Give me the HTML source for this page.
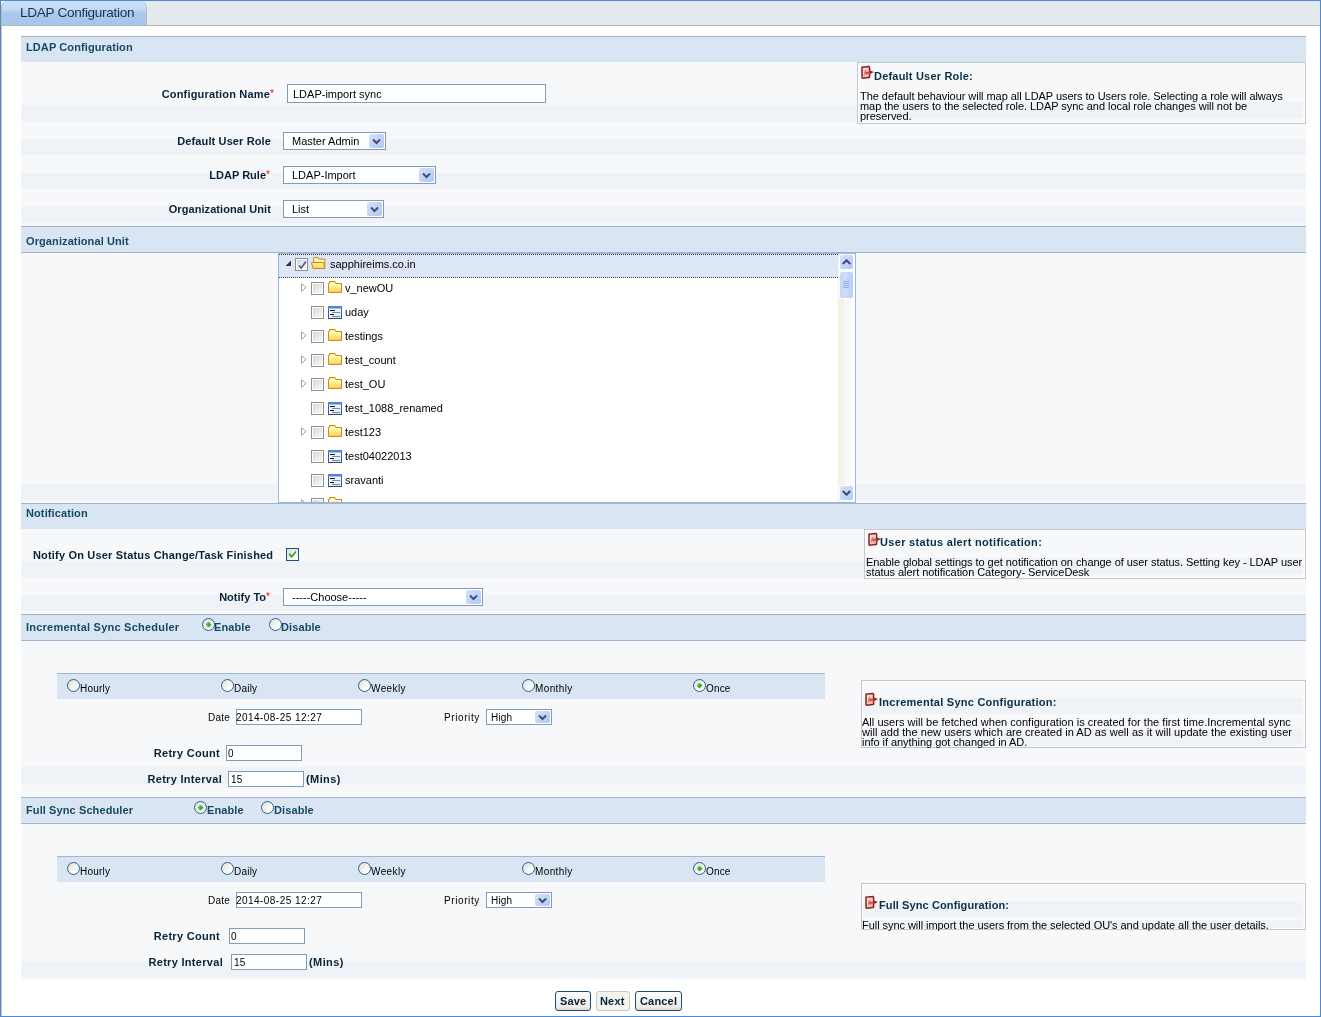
<!DOCTYPE html>
<html><head><meta charset="utf-8">
<style>
*{box-sizing:border-box}
html,body{margin:0;padding:0;width:1321px;height:1017px;overflow:hidden;background:#fff;font-family:"Liberation Sans",sans-serif;font-size:11px;color:#000}
.a{position:absolute}
.t{position:absolute;white-space:pre;line-height:12px;font-size:11px}
.b{font-weight:bold}
.s10{font-size:10px;letter-spacing:0.2px}
.lbl{font-weight:bold;color:#082338;letter-spacing:0.18px}
.hd{font-weight:bold;color:#164a63;letter-spacing:0.1px}
.req{color:#f00;font-size:10px}
.hdr{position:absolute;left:21px;width:1285px;background:#dae5f3;border-top:1px solid #a2b5cc}
.lt{position:absolute;left:21px;width:1285px;background:#f7f8fa}
.dk{position:absolute;left:21px;width:1285px;background:#eff2f6}
.inp{position:absolute;border:1px solid #7f9db9;background:#fff}
.sel{position:absolute;border:1px solid #7f9db9;background:#fff}
.sel .btn{position:absolute;right:1px;top:1px;width:15px;bottom:1px;border-radius:2px;background:linear-gradient(135deg,#d6e2fc 0%,#c3d4f9 50%,#b1c7f4 100%)}
.sel .btn svg{position:absolute;left:3px;top:4px}
.help{position:absolute;border:1px solid #c3c7cb;background:#f7f8fa;box-shadow:inset 0 0 0 1px #fdfdfe}
.hk{position:absolute;background:#eff2f6}
.ht{position:absolute;white-space:pre;font-weight:bold;color:#0a3048;line-height:12px;letter-spacing:0.2px}
.hb{position:absolute;white-space:pre;line-height:10px;letter-spacing:-0.05px}
.radio{position:absolute;width:13px;height:13px;border-radius:50%;border:1px solid #2a5f92;background:linear-gradient(135deg,#dcdcd6 0%,#efefeb 40%,#fdfdfd 75%,#fff 100%)}
.radio.on::after{content:"";position:absolute;left:2.5px;top:2.5px;width:6px;height:6px;clip-path:polygon(50% 0,100% 50%,50% 100%,0 50%);background:linear-gradient(135deg,#5ee05e 0%,#2bb52b 50%,#0a8a0a 100%)}
.cb{position:absolute;width:13px;height:13px;border:1px solid #8f9090;box-shadow:inset 0 0 0 1px #fff;background:linear-gradient(135deg,#d0d0cf 0%,#e6e6e4 45%,#fafafa 100%)}
</style></head><body><div style="position:absolute;left:0;top:0;width:1321px;height:1017px;will-change:transform">
<!-- outer border -->
<div class="a" style="left:0;top:0;width:1321px;height:1017px;border:1px solid #4a8ad6"></div>
<!-- tab bar -->
<div class="a" style="left:1px;top:1px;width:1319px;height:25px;background:#e4e9ed;border-bottom:1px solid #b5baa8"></div>
<div class="a" style="left:1px;top:1px;width:6px;height:8px;background:#fbfbf8"></div>
<div class="a" style="left:1px;top:25px;width:1px;height:991px;background:#c4c4c0"></div>
<div class="a" style="left:1px;top:1px;width:146px;height:25px;border-top-right-radius:7px;border-top-left-radius:6px;border-left:1px solid #b9bdb0;border-right:1px solid #b9bdb3;border-bottom:1px solid #b5baa8;background:linear-gradient(#cbe0f6 0px,#c9ddf5 7px,#c3d3f3 9px,#abc9ee 12px,#a4c5ec 25px)"></div>
<div class="t" style="left:20px;top:5px;font-size:13.6px;line-height:15px;letter-spacing:-0.32px;color:#16384c">LDAP Configuration</div>

<!-- ============ Section 1 ============ -->
<div class="hdr" style="top:36px;height:26px"></div>
<div class="t hd" style="left:26px;top:41px">LDAP Configuration</div>
<div class="lt" style="top:62px;height:164px"></div>
<div class="dk" style="top:105px;height:16px"></div>
<div class="dk" style="top:139px;height:16px"></div>
<div class="dk" style="top:173px;height:16px"></div>
<div class="dk" style="top:207px;height:16px"></div>

<div class="t lbl" style="right:1051px;top:88px">Configuration Name</div><div class="t req" style="left:270px;top:88px">*</div>
<div class="inp" style="left:287px;top:84px;width:259px;height:19px"></div>
<div class="t" style="left:293px;top:88px">LDAP-import sync</div>

<div class="t lbl" style="right:1050px;top:135px;letter-spacing:0.12px">Default User Role</div>
<div class="sel" style="left:283px;top:132px;width:103px;height:18px"><div class="btn"><svg width="9" height="7" viewBox="0 0 9 7"><path d="M1 1.5 L4.5 5 L8 1.5" fill="none" stroke="#3e5078" stroke-width="2"/></svg></div></div>
<div class="t" style="left:292px;top:135px">Master Admin</div>

<div class="t lbl" style="right:1055px;top:169px;letter-spacing:0px">LDAP Rule</div><div class="t req" style="left:266px;top:169px">*</div>
<div class="sel" style="left:283px;top:166px;width:153px;height:18px"><div class="btn"><svg width="9" height="7" viewBox="0 0 9 7"><path d="M1 1.5 L4.5 5 L8 1.5" fill="none" stroke="#3e5078" stroke-width="2"/></svg></div></div>
<div class="t" style="left:292px;top:169px">LDAP-Import</div>

<div class="t lbl" style="right:1050px;top:203px;letter-spacing:0.08px">Organizational Unit</div>
<div class="sel" style="left:283px;top:200px;width:101px;height:18px"><div class="btn"><svg width="9" height="7" viewBox="0 0 9 7"><path d="M1 1.5 L4.5 5 L8 1.5" fill="none" stroke="#3e5078" stroke-width="2"/></svg></div></div>
<div class="t" style="left:292px;top:203px">List</div>

<!-- help 1 -->
<div class="help" style="left:857px;top:62px;width:449px;height:62px"></div><div class="hk" style="left:859px;top:102px;width:444px;height:16px"></div>
<svg class="a" style="left:860px;top:65px" width="15" height="15" viewBox="0 0 15 15"><defs><linearGradient id="hg" x1="0" y1="0" x2="1" y2="1"><stop offset="0" stop-color="#fde8e2"/><stop offset="1" stop-color="#f4aaa2"/></linearGradient></defs><path d="M2 2.2 L8.8 1.6 Q9.6 1.6 9.6 2.4 V11.9 Q9.6 12.5 8.9 12.6 L2.6 13.3 Q2 13.3 2 12.6 Z" fill="url(#hg)" stroke="#7e2820" stroke-width="1.5"/><path d="M4 10.5 L5.5 5 L6.6 10" fill="none" stroke="#c7766c" stroke-width="1"/><path d="M5.5 8 L10.8 7.3" stroke="#e23c3c" stroke-width="1.8"/><path d="M10 5.4 L13.8 7 L10.2 8.9 Z" fill="#8a2420"/></svg><div class="t ht" style="left:874px;top:70px">Default User Role:</div>
<div class="hb" style="left:860px;top:91px">The default behaviour will map all LDAP users to Users role. Selecting a role will always
map the users to the selected role. LDAP sync and local role changes will not be
preserved.</div>

<!-- ============ Section 2 Org Unit ============ -->
<div class="hdr" style="top:226px;height:27px;border-bottom:1px solid #a2b5cc"></div>
<div class="t hd" style="left:26px;top:235px">Organizational Unit</div>
<div class="lt" style="top:253px;height:250px"></div>
<div class="dk" style="top:484px;height:16px"></div>

<!-- tree box -->
<div class="a" id="tree" style="left:278px;top:253px;width:578px;height:250px;border:1px solid #97b7e3;background:#fff;overflow:hidden">
<div class="a" style="left:0;top:0;width:559px;height:24px;background:#dce6f4;border-top:1px dotted #444;border-bottom:1px dotted #444"></div>
<svg class="a" style="left:6px;top:6px" width="7" height="7" viewBox="0 0 7 7"><path d="M6 0.5 V6 H0.5 Z" fill="#333"/></svg>
<div class="cb" style="left:16px;top:4px"><svg class="a" style="left:2px;top:1px" width="9" height="10" viewBox="0 0 9 10"><path d="M1 5.5 L3.2 8 L8 1.5" fill="none" stroke="#3e5aa8" stroke-width="1.6"/></svg></div>
<svg class="a" style="left:32px;top:3px" width="16" height="13" viewBox="0 0 16 13"><defs><linearGradient id="fo" x1="0" y1="0" x2="0" y2="1"><stop offset="0" stop-color="#fff6a0"/><stop offset="1" stop-color="#fbd060"/></linearGradient></defs><path d="M2.5 2.5 V1.2 Q2.5 0.5 3.2 0.5 H6.8 L7.8 2 H13.8 V11.5 H2.5 Z" fill="#fff4b0" stroke="#c98a1a"/><path d="M0.5 5.5 H12.5 L13.8 11.5 H2 Z" fill="url(#fo)" stroke="#c98a1a"/></svg>
<div class="t" style="left:51px;top:4px">sapphireims.co.in</div>
<svg class="a" style="left:22px;top:29px" width="6" height="9" viewBox="0 0 6 9"><path d="M0.5 0.7 L5 4.5 L0.5 8.3 Z" fill="#fff" stroke="#a0a0a0" stroke-width="1"/></svg>
<div class="cb" style="left:32px;top:28px"></div>
<svg class="a" style="left:49px;top:27px" width="15" height="13" viewBox="0 0 15 13"><defs><linearGradient id="fg" x1="0" y1="0" x2="0" y2="1"><stop offset="0" stop-color="#fffbb0"/><stop offset="0.45" stop-color="#fff48a"/><stop offset="1" stop-color="#fbcf5f"/></linearGradient></defs><path d="M0.5 2.5 H1.5 V0.5 H7 L7.5 2.5 H13.5 V11.5 H0.5 Z" fill="url(#fg)" stroke="#c98a1a" stroke-width="1"/><path d="M1.5 3.5 H12.5" stroke="#fffef0" stroke-width="1"/></svg>
<div class="t" style="left:66px;top:28px">v_newOU</div>
<div class="cb" style="left:32px;top:52px"></div>
<svg class="a" style="left:49px;top:52px" width="14" height="13" viewBox="0 0 14 13"><defs><linearGradient id="ug" x1="0" y1="0" x2="1" y2="1"><stop offset="0" stop-color="#fff"/><stop offset="1" stop-color="#dfe8f7"/></linearGradient></defs><rect x="0.5" y="0.5" width="13" height="12" fill="url(#ug)" stroke="#3560a8"/><rect x="0" y="0" width="14" height="2.5" fill="#4f82e0"/><rect x="0" y="12" width="14" height="1" fill="#26497e"/><rect x="2" y="4" width="5" height="1" fill="#111"/><rect x="4" y="6" width="8" height="1" fill="#888"/><rect x="2" y="8" width="4" height="1" fill="#111"/><rect x="4" y="10" width="8" height="1" fill="#888"/></svg>
<div class="t" style="left:66px;top:52px">uday</div>
<svg class="a" style="left:22px;top:77px" width="6" height="9" viewBox="0 0 6 9"><path d="M0.5 0.7 L5 4.5 L0.5 8.3 Z" fill="#fff" stroke="#a0a0a0" stroke-width="1"/></svg>
<div class="cb" style="left:32px;top:76px"></div>
<svg class="a" style="left:49px;top:75px" width="15" height="13" viewBox="0 0 15 13"><defs><linearGradient id="fg" x1="0" y1="0" x2="0" y2="1"><stop offset="0" stop-color="#fffbb0"/><stop offset="0.45" stop-color="#fff48a"/><stop offset="1" stop-color="#fbcf5f"/></linearGradient></defs><path d="M0.5 2.5 H1.5 V0.5 H7 L7.5 2.5 H13.5 V11.5 H0.5 Z" fill="url(#fg)" stroke="#c98a1a" stroke-width="1"/><path d="M1.5 3.5 H12.5" stroke="#fffef0" stroke-width="1"/></svg>
<div class="t" style="left:66px;top:76px">testings</div>
<svg class="a" style="left:22px;top:101px" width="6" height="9" viewBox="0 0 6 9"><path d="M0.5 0.7 L5 4.5 L0.5 8.3 Z" fill="#fff" stroke="#a0a0a0" stroke-width="1"/></svg>
<div class="cb" style="left:32px;top:100px"></div>
<svg class="a" style="left:49px;top:99px" width="15" height="13" viewBox="0 0 15 13"><defs><linearGradient id="fg" x1="0" y1="0" x2="0" y2="1"><stop offset="0" stop-color="#fffbb0"/><stop offset="0.45" stop-color="#fff48a"/><stop offset="1" stop-color="#fbcf5f"/></linearGradient></defs><path d="M0.5 2.5 H1.5 V0.5 H7 L7.5 2.5 H13.5 V11.5 H0.5 Z" fill="url(#fg)" stroke="#c98a1a" stroke-width="1"/><path d="M1.5 3.5 H12.5" stroke="#fffef0" stroke-width="1"/></svg>
<div class="t" style="left:66px;top:100px">test_count</div>
<svg class="a" style="left:22px;top:125px" width="6" height="9" viewBox="0 0 6 9"><path d="M0.5 0.7 L5 4.5 L0.5 8.3 Z" fill="#fff" stroke="#a0a0a0" stroke-width="1"/></svg>
<div class="cb" style="left:32px;top:124px"></div>
<svg class="a" style="left:49px;top:123px" width="15" height="13" viewBox="0 0 15 13"><defs><linearGradient id="fg" x1="0" y1="0" x2="0" y2="1"><stop offset="0" stop-color="#fffbb0"/><stop offset="0.45" stop-color="#fff48a"/><stop offset="1" stop-color="#fbcf5f"/></linearGradient></defs><path d="M0.5 2.5 H1.5 V0.5 H7 L7.5 2.5 H13.5 V11.5 H0.5 Z" fill="url(#fg)" stroke="#c98a1a" stroke-width="1"/><path d="M1.5 3.5 H12.5" stroke="#fffef0" stroke-width="1"/></svg>
<div class="t" style="left:66px;top:124px">test_OU</div>
<div class="cb" style="left:32px;top:148px"></div>
<svg class="a" style="left:49px;top:148px" width="14" height="13" viewBox="0 0 14 13"><defs><linearGradient id="ug" x1="0" y1="0" x2="1" y2="1"><stop offset="0" stop-color="#fff"/><stop offset="1" stop-color="#dfe8f7"/></linearGradient></defs><rect x="0.5" y="0.5" width="13" height="12" fill="url(#ug)" stroke="#3560a8"/><rect x="0" y="0" width="14" height="2.5" fill="#4f82e0"/><rect x="0" y="12" width="14" height="1" fill="#26497e"/><rect x="2" y="4" width="5" height="1" fill="#111"/><rect x="4" y="6" width="8" height="1" fill="#888"/><rect x="2" y="8" width="4" height="1" fill="#111"/><rect x="4" y="10" width="8" height="1" fill="#888"/></svg>
<div class="t" style="left:66px;top:148px">test_1088_renamed</div>
<svg class="a" style="left:22px;top:173px" width="6" height="9" viewBox="0 0 6 9"><path d="M0.5 0.7 L5 4.5 L0.5 8.3 Z" fill="#fff" stroke="#a0a0a0" stroke-width="1"/></svg>
<div class="cb" style="left:32px;top:172px"></div>
<svg class="a" style="left:49px;top:171px" width="15" height="13" viewBox="0 0 15 13"><defs><linearGradient id="fg" x1="0" y1="0" x2="0" y2="1"><stop offset="0" stop-color="#fffbb0"/><stop offset="0.45" stop-color="#fff48a"/><stop offset="1" stop-color="#fbcf5f"/></linearGradient></defs><path d="M0.5 2.5 H1.5 V0.5 H7 L7.5 2.5 H13.5 V11.5 H0.5 Z" fill="url(#fg)" stroke="#c98a1a" stroke-width="1"/><path d="M1.5 3.5 H12.5" stroke="#fffef0" stroke-width="1"/></svg>
<div class="t" style="left:66px;top:172px">test123</div>
<div class="cb" style="left:32px;top:196px"></div>
<svg class="a" style="left:49px;top:196px" width="14" height="13" viewBox="0 0 14 13"><defs><linearGradient id="ug" x1="0" y1="0" x2="1" y2="1"><stop offset="0" stop-color="#fff"/><stop offset="1" stop-color="#dfe8f7"/></linearGradient></defs><rect x="0.5" y="0.5" width="13" height="12" fill="url(#ug)" stroke="#3560a8"/><rect x="0" y="0" width="14" height="2.5" fill="#4f82e0"/><rect x="0" y="12" width="14" height="1" fill="#26497e"/><rect x="2" y="4" width="5" height="1" fill="#111"/><rect x="4" y="6" width="8" height="1" fill="#888"/><rect x="2" y="8" width="4" height="1" fill="#111"/><rect x="4" y="10" width="8" height="1" fill="#888"/></svg>
<div class="t" style="left:66px;top:196px">test04022013</div>
<div class="cb" style="left:32px;top:220px"></div>
<svg class="a" style="left:49px;top:220px" width="14" height="13" viewBox="0 0 14 13"><defs><linearGradient id="ug" x1="0" y1="0" x2="1" y2="1"><stop offset="0" stop-color="#fff"/><stop offset="1" stop-color="#dfe8f7"/></linearGradient></defs><rect x="0.5" y="0.5" width="13" height="12" fill="url(#ug)" stroke="#3560a8"/><rect x="0" y="0" width="14" height="2.5" fill="#4f82e0"/><rect x="0" y="12" width="14" height="1" fill="#26497e"/><rect x="2" y="4" width="5" height="1" fill="#111"/><rect x="4" y="6" width="8" height="1" fill="#888"/><rect x="2" y="8" width="4" height="1" fill="#111"/><rect x="4" y="10" width="8" height="1" fill="#888"/></svg>
<div class="t" style="left:66px;top:220px">sravanti</div>
<svg class="a" style="left:22px;top:245px" width="6" height="9" viewBox="0 0 6 9"><path d="M0.5 0.7 L5 4.5 L0.5 8.3 Z" fill="#fff" stroke="#a0a0a0" stroke-width="1"/></svg>
<div class="cb" style="left:32px;top:244px"></div>
<svg class="a" style="left:49px;top:243px" width="15" height="13" viewBox="0 0 15 13"><defs><linearGradient id="fg" x1="0" y1="0" x2="0" y2="1"><stop offset="0" stop-color="#fffbb0"/><stop offset="0.45" stop-color="#fff48a"/><stop offset="1" stop-color="#fbcf5f"/></linearGradient></defs><path d="M0.5 2.5 H1.5 V0.5 H7 L7.5 2.5 H13.5 V11.5 H0.5 Z" fill="url(#fg)" stroke="#c98a1a" stroke-width="1"/><path d="M1.5 3.5 H12.5" stroke="#fffef0" stroke-width="1"/></svg>
<div class="a" style="left:559px;top:0;width:17px;height:248px;background:linear-gradient(90deg,#f3f1e8 0,#f3f1e8 6px,#f6f7fa 6px,#fbfbfc 15px,#fff 17px)"></div>
<div class="a" style="left:560px;top:0px;width:15px;height:16px;background:#fff;border-radius:2px"><div class="a" style="left:1px;top:1px;width:13px;height:14px;border-radius:2px;background:linear-gradient(135deg,#d5e1fc 0%,#c6d6fa 50%,#b3c8f5 100%)"><svg class="a" style="left:2px;top:4px" width="9" height="6" viewBox="0 0 9 6"><path d="M0.8 5 L4.5 1.3 L8.2 5" fill="none" stroke="#3b4a6e" stroke-width="2"/></svg></div></div>
<div class="a" style="left:560px;top:231px;width:15px;height:16px;background:#fff;border-radius:2px"><div class="a" style="left:1px;top:1px;width:13px;height:14px;border-radius:2px;background:linear-gradient(135deg,#d5e1fc 0%,#c6d6fa 50%,#b3c8f5 100%)"><svg class="a" style="left:2px;top:4px" width="9" height="6" viewBox="0 0 9 6"><path d="M0.8 1 L4.5 4.7 L8.2 1" fill="none" stroke="#3b4a6e" stroke-width="2"/></svg></div></div>
<div class="a" style="left:560px;top:17px;width:15px;height:28px;background:#fff;border-radius:2px"><div class="a" style="left:1px;top:1px;width:13px;height:26px;border-radius:2px;background:linear-gradient(90deg,#c6d6fa 0%,#cfdcfb 40%,#b9cdf7 100%)"><div class="a" style="left:3px;top:9px;width:6px;height:1px;background:#8db1f3;box-shadow:0 2px 0 #8db1f3,0 4px 0 #8db1f3,0 6px 0 #8db1f3"></div></div></div>
</div>

<!-- ============ Section 3 Notification ============ -->
<div class="hdr" style="top:503px;height:26px"></div>
<div class="t hd" style="left:26px;top:507px">Notification</div>
<div class="lt" style="top:529px;height:85px"></div>
<div class="dk" style="top:561px;height:16px"></div>
<div class="dk" style="top:595px;height:16px"></div>

<div class="t lbl" style="left:33px;top:549px">Notify On User Status Change/Task Finished</div>
<div class="a" style="left:286px;top:548px;width:13px;height:13px;border:1px solid #1c5180;background:linear-gradient(135deg,#dcdcd5 0%,#f3f3ef 60%,#fff 100%)"><svg class="a" style="left:1px;top:1px" width="10" height="10" viewBox="0 0 10 10"><path d="M1 2.8 L1 5 L3.6 8 L8.2 2.6 L8.2 0.6 L3.6 5.6 Z" fill="#1ca01c"/></svg></div>

<div class="t lbl" style="right:1055px;top:591px;letter-spacing:0px">Notify To</div><div class="t req" style="left:266px;top:591px">*</div>
<div class="sel" style="left:283px;top:588px;width:200px;height:18px"><div class="btn"><svg width="9" height="7" viewBox="0 0 9 7"><path d="M1 1.5 L4.5 5 L8 1.5" fill="none" stroke="#3e5078" stroke-width="2"/></svg></div></div>
<div class="t" style="left:292px;top:591px">-----Choose-----</div>

<!-- help 2 -->
<div class="help" style="left:864px;top:529px;width:442px;height:50px"></div><div class="hk" style="left:866px;top:558px;width:437px;height:16px"></div>
<svg class="a" style="left:867px;top:532px" width="15" height="15" viewBox="0 0 15 15"><defs><linearGradient id="hg" x1="0" y1="0" x2="1" y2="1"><stop offset="0" stop-color="#fde8e2"/><stop offset="1" stop-color="#f4aaa2"/></linearGradient></defs><path d="M2 2.2 L8.8 1.6 Q9.6 1.6 9.6 2.4 V11.9 Q9.6 12.5 8.9 12.6 L2.6 13.3 Q2 13.3 2 12.6 Z" fill="url(#hg)" stroke="#7e2820" stroke-width="1.5"/><path d="M4 10.5 L5.5 5 L6.6 10" fill="none" stroke="#c7766c" stroke-width="1"/><path d="M5.5 8 L10.8 7.3" stroke="#e23c3c" stroke-width="1.8"/><path d="M10 5.4 L13.8 7 L10.2 8.9 Z" fill="#8a2420"/></svg><div class="t ht" style="left:880px;top:536px;letter-spacing:0.32px">User status alert notification:</div>
<div class="hb" style="left:866px;top:557px">Enable global settings to get notification on change of user status. Setting key - LDAP user
status alert notification Category- ServiceDesk</div>

<!-- ============ Section 4 Incremental ============ -->
<div class="hdr" style="top:614px;height:27px;border-bottom:1px solid #a2b5cc"></div>
<div class="t hd" style="left:26px;top:621px;letter-spacing:0.23px">Incremental Sync Scheduler</div>
<div class="radio on" style="left:202px;top:618px"></div>
<div class="t hd" style="left:214px;top:621px">Enable</div>
<div class="radio" style="left:269px;top:618px"></div>
<div class="t hd" style="left:281px;top:621px">Disable</div>
<div class="lt" style="top:641px;height:156px"></div>
<div class="dk" style="top:767px;height:17px"></div>

<div class="a" style="left:57px;top:673px;width:768px;height:26px;background:#dae5f3;border-top:1px solid #a2b5cc"></div>
<div class="radio" style="left:67px;top:679px"></div><div class="t s10" style="left:80px;top:683px;letter-spacing:0.2px">Hourly</div>
<div class="radio" style="left:221px;top:679px"></div><div class="t s10" style="left:234px;top:683px;letter-spacing:0.22px">Daily</div>
<div class="radio" style="left:358px;top:679px"></div><div class="t s10" style="left:371px;top:683px;letter-spacing:0.4px">Weekly</div>
<div class="radio" style="left:522px;top:679px"></div><div class="t s10" style="left:535px;top:683px;letter-spacing:0.37px">Monthly</div>
<div class="radio on" style="left:693px;top:679px"></div><div class="t s10" style="left:706px;top:683px;letter-spacing:0.15px">Once</div>

<div class="t s10" style="left:208px;top:712px">Date</div>
<div class="inp" style="left:236px;top:709px;width:126px;height:16px"></div>
<div class="t s10" style="left:236px;top:712px;letter-spacing:0.45px">2014-08-25 12:27</div>
<div class="t s10" style="left:444px;top:712px;letter-spacing:0.6px">Priority</div>
<div class="sel" style="left:486px;top:709px;width:66px;height:16px"><div class="btn" style="width:15px"><svg style="top:3px" width="9" height="7" viewBox="0 0 9 7"><path d="M1 1.5 L4.5 5 L8 1.5" fill="none" stroke="#3e5078" stroke-width="2"/></svg></div></div>
<div class="t s10" style="left:491px;top:712px">High</div>

<div class="t lbl" style="right:1101px;top:747px;letter-spacing:0.3px">Retry Count</div>
<div class="inp" style="left:226px;top:745px;width:76px;height:16px"></div>
<div class="t s10" style="left:228px;top:748px">0</div>
<div class="t lbl" style="right:1099px;top:773px;letter-spacing:0.3px">Retry Interval</div>
<div class="inp" style="left:228px;top:771px;width:76px;height:16px"></div>
<div class="t s10" style="left:231px;top:774px">15</div>
<div class="t lbl" style="left:306px;top:773px;letter-spacing:0.4px">(Mins)</div>

<!-- help 3 -->
<div class="help" style="left:861px;top:680px;width:445px;height:68px"></div><div class="hk" style="left:863px;top:698px;width:440px;height:16px"></div><div class="hk" style="left:863px;top:729px;width:440px;height:16px"></div>
<svg class="a" style="left:864px;top:692px" width="15" height="15" viewBox="0 0 15 15"><defs><linearGradient id="hg" x1="0" y1="0" x2="1" y2="1"><stop offset="0" stop-color="#fde8e2"/><stop offset="1" stop-color="#f4aaa2"/></linearGradient></defs><path d="M2 2.2 L8.8 1.6 Q9.6 1.6 9.6 2.4 V11.9 Q9.6 12.5 8.9 12.6 L2.6 13.3 Q2 13.3 2 12.6 Z" fill="url(#hg)" stroke="#7e2820" stroke-width="1.5"/><path d="M4 10.5 L5.5 5 L6.6 10" fill="none" stroke="#c7766c" stroke-width="1"/><path d="M5.5 8 L10.8 7.3" stroke="#e23c3c" stroke-width="1.8"/><path d="M10 5.4 L13.8 7 L10.2 8.9 Z" fill="#8a2420"/></svg><div class="t ht" style="left:879px;top:696px;letter-spacing:0.25px">Incremental Sync Configuration:</div>
<div class="hb" style="left:862px;top:717px"><span style="letter-spacing:0.03px">All users will be fetched when configuration is created for the first time.Incremental sync</span>
<span style="letter-spacing:0.05px">will add the new users which are created in AD as well as it will update the existing user</span>
info if anything got changed in AD.</div>

<!-- ============ Section 5 Full ============ -->
<div class="hdr" style="top:797px;height:27px;border-bottom:1px solid #a2b5cc"></div>
<div class="t hd" style="left:26px;top:804px">Full Sync Scheduler</div>
<div class="radio on" style="left:194px;top:801px"></div>
<div class="t hd" style="left:207px;top:804px">Enable</div>
<div class="radio" style="left:261px;top:801px"></div>
<div class="t hd" style="left:274px;top:804px">Disable</div>
<div class="lt" style="top:824px;height:156px"></div>
<div class="dk" style="top:961px;height:16px"></div>

<div class="a" style="left:57px;top:856px;width:768px;height:26px;background:#dae5f3;border-top:1px solid #a2b5cc"></div>
<div class="radio" style="left:67px;top:862px"></div><div class="t s10" style="left:80px;top:866px;letter-spacing:0.2px">Hourly</div>
<div class="radio" style="left:221px;top:862px"></div><div class="t s10" style="left:234px;top:866px;letter-spacing:0.22px">Daily</div>
<div class="radio" style="left:358px;top:862px"></div><div class="t s10" style="left:371px;top:866px;letter-spacing:0.4px">Weekly</div>
<div class="radio" style="left:522px;top:862px"></div><div class="t s10" style="left:535px;top:866px;letter-spacing:0.37px">Monthly</div>
<div class="radio on" style="left:693px;top:862px"></div><div class="t s10" style="left:706px;top:866px;letter-spacing:0.15px">Once</div>

<div class="t s10" style="left:208px;top:895px">Date</div>
<div class="inp" style="left:236px;top:892px;width:126px;height:16px"></div>
<div class="t s10" style="left:236px;top:895px;letter-spacing:0.45px">2014-08-25 12:27</div>
<div class="t s10" style="left:444px;top:895px;letter-spacing:0.6px">Priority</div>
<div class="sel" style="left:486px;top:892px;width:66px;height:16px"><div class="btn"><svg style="top:3px" width="9" height="7" viewBox="0 0 9 7"><path d="M1 1.5 L4.5 5 L8 1.5" fill="none" stroke="#3e5078" stroke-width="2"/></svg></div></div>
<div class="t s10" style="left:491px;top:895px">High</div>

<div class="t lbl" style="right:1101px;top:930px;letter-spacing:0.3px">Retry Count</div>
<div class="inp" style="left:229px;top:928px;width:76px;height:16px"></div>
<div class="t s10" style="left:231px;top:931px">0</div>
<div class="t lbl" style="right:1098px;top:956px;letter-spacing:0.3px">Retry Interval</div>
<div class="inp" style="left:231px;top:954px;width:76px;height:16px"></div>
<div class="t s10" style="left:234px;top:957px">15</div>
<div class="t lbl" style="left:309px;top:956px;letter-spacing:0.4px">(Mins)</div>

<!-- help 4 -->
<div class="help" style="left:861px;top:883px;width:445px;height:47px"></div><div class="hk" style="left:863px;top:901px;width:440px;height:16px"></div><div class="hk" style="left:863px;top:920px;width:440px;height:8px"></div>
<svg class="a" style="left:864px;top:895px" width="15" height="15" viewBox="0 0 15 15"><defs><linearGradient id="hg" x1="0" y1="0" x2="1" y2="1"><stop offset="0" stop-color="#fde8e2"/><stop offset="1" stop-color="#f4aaa2"/></linearGradient></defs><path d="M2 2.2 L8.8 1.6 Q9.6 1.6 9.6 2.4 V11.9 Q9.6 12.5 8.9 12.6 L2.6 13.3 Q2 13.3 2 12.6 Z" fill="url(#hg)" stroke="#7e2820" stroke-width="1.5"/><path d="M4 10.5 L5.5 5 L6.6 10" fill="none" stroke="#c7766c" stroke-width="1"/><path d="M5.5 8 L10.8 7.3" stroke="#e23c3c" stroke-width="1.8"/><path d="M10 5.4 L13.8 7 L10.2 8.9 Z" fill="#8a2420"/></svg><div class="t ht" style="left:879px;top:899px;letter-spacing:0.1px">Full Sync Configuration:</div>
<div class="hb" style="left:862px;top:920px">Full sync will import the users from the selected OU's and update all the user details.</div>

<!-- buttons -->
<div class="a" style="left:555px;top:991px;width:36px;height:20px;border:1px solid #1e4a80;border-radius:3px;background:linear-gradient(#fff,#ecebe6 85%,#d8d5cc)"></div>
<div class="t lbl" style="left:560px;top:995px">Save</div>
<div class="a" style="left:596px;top:991px;width:34px;height:20px;border:1px solid #cac8bb;border-radius:3px;background:#f4f3ee"></div>
<div class="t lbl" style="left:600px;top:995px">Next</div>
<div class="a" style="left:635px;top:991px;width:47px;height:20px;border:1px solid #1e4a80;border-radius:3px;background:linear-gradient(#fff,#ecebe6 85%,#d8d5cc)"></div>
<div class="t lbl" style="left:640px;top:995px">Cancel</div>
</div></body></html>
